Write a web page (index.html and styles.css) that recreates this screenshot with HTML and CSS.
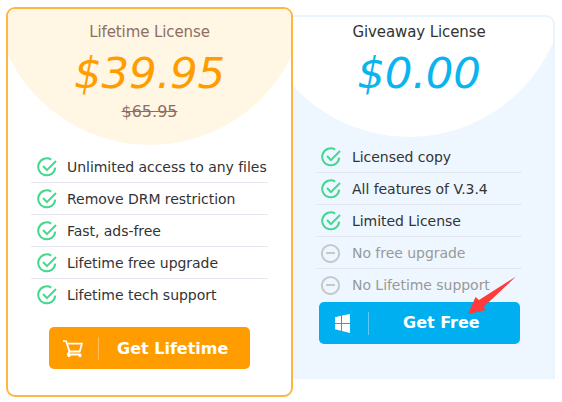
FILE: index.html
```
<!DOCTYPE html>
<html lang="en">
<head>
    <meta charset="UTF-8">
    <title>License</title>
    <link rel="stylesheet" href="styles.css">
</head>
<body>
    <svg class="symbols">
        <symbol id="check" viewBox="0 0 20 20">
            <path d="M14.2 2.6A8.5 8.5 0 1 0 18.2 10.7M6.1 9l3.8 4.1L19 4"/>
        </symbol>
        <symbol id="minus" viewBox="0 0 20 20">
            <circle cx="9.500" cy="10.500" r="8.600"/>
            <path d="M5 10h9"/>
        </symbol>
    </svg>
    <main class="plans">
        <section class="card lifetime">
            <header>
                <h2>Lifetime License</h2>
                <p class="price">$39.95</p>
                <del>$65.95</del>
            </header>
            <ul>
                <li><svg><use href="#check"/></svg><span>Unlimited access to any files</span></li>
                <li><svg><use href="#check"/></svg><span>Remove DRM restriction</span></li>
                <li><svg><use href="#check"/></svg><span>Fast, ads-free</span></li>
                <li><svg><use href="#check"/></svg><span>Lifetime free upgrade</span></li>
                <li><svg><use href="#check"/></svg><span>Lifetime tech support</span></li>
            </ul>
            <a class="btn" href="javascript:;">
                <span class="icon">
                    <svg class="cart" width="20" height="18" viewBox="0 0 20 18">
                        <path d="M0 1.200h3.200l3.300 10.300h10.200L19 3.600H5M6.400 11.500l-1.600 3H18"/>
                        <circle cx="6" cy="15.600" r="1.600"/>
                        <circle cx="17" cy="15.600" r="1.600"/>
                    </svg>
                </span>
                <b>Get Lifetime</b>
            </a>
        </section>
        <section class="card giveaway">
            <header>
                <h2>Giveaway License</h2>
                <p class="price">$0.00</p>
            </header>
            <ul>
                <li><svg><use href="#check"/></svg><span>Licensed copy</span></li>
                <li><svg><use href="#check"/></svg><span>All features of V.3.4</span></li>
                <li><svg><use href="#check"/></svg><span>Limited License</span></li>
                <li class="no"><svg><use href="#minus"/></svg><span>No free upgrade</span></li>
                <li class="no"><svg><use href="#minus"/></svg><span>No Lifetime support</span></li>
            </ul>
            <a class="btn" href="javascript:;">
                <span class="icon">
                    <svg width="15" height="19" viewBox="0 0 15 19">
                        <path fill="#fff" d="M0 3.200L6 1.700V9H0zM7 1.500L15 0v9H7zM0 10h6v6.800l-6-1.500zM7 10h8v9l-8-2z"/>
                    </svg>
                </span>
                <b>Get Free</b>
            </a>
            <svg class="arrow" width="49" height="39" viewBox="0 0 49 39">
                <path fill="#ff3b3b" d="M48 .5L11 24 7.500 21 0 38l18-4-2.500-3z"/>
            </svg>
        </section>
    </main>
</body>
</html>
```
FILE: styles.css
```
* {
    padding: 0;
    margin: 0;
    box-sizing: border-box;
}

body {
    width: 562px;
    height: 402px;
    overflow: hidden;
    background: #fff;
    color: #333;
    font-family: Verdana, "DejaVu Sans", sans-serif;
}

.symbols {
    display: none;
}

.plans {
    display: flex;
    align-items: flex-start;
    padding: 7px 0 0 6px;
}

.card {
    position: relative;
    display: flex;
    flex-direction: column;
}

header {
    display: flex;
    flex-direction: column;
    align-items: center;
    overflow: hidden;
    position: relative;
    white-space: nowrap;
}

/* half circle behind the price */
header::before {
    content: "";
    position: absolute;
    width: 314px;
    height: 314px;
    bottom: 0;
    border-radius: 50%;
}

h2,
.price,
del {
    position: relative;
}

h2 {
    font-size: 15px;
    font-weight: normal;
    line-height: 20px;
    letter-spacing: -.1px;
}

.price {
    margin-top: 6px;
    font-size: 43.5px;
    font-style: italic;
    line-height: 50px;
    letter-spacing: -.2px;
}

.lifetime {
    width: 287px;
    height: 390px;
    z-index: 1;
    background: #fff;
    border: 2px solid #ffb640;
    border-radius: 9px;
}

.lifetime header {
    height: 136px;
    padding-top: 13px;
    color: #8d6e63;
    border-radius: 7px 7px 0 0;
}

.lifetime header::before {
    left: -15px;
    background: #fff7e3;
}

.lifetime .price {
    color: #ff9d00;
}

del {
    font-size: 16px;
    line-height: 20px;
    margin-top: 4px;
}

.giveaway {
    width: 272px;
    height: 364px;
    margin: 8px 0 0 -10px;
    background: #eef7ff;
    border: 2px solid #e8f5ff;
    border-bottom: none;
    border-radius: 9px 9px 0 0;
}

.giveaway header {
    height: 120px;
    padding-top: 5px;
    border-radius: 7px 7px 0 0;
}

.giveaway header::before {
    left: -33px;
    background: #fff;
}

.giveaway .price {
    color: #0ab5ef;
}

ul {
    list-style: none;
    width: 237px;
    margin: 6px 0 0 23px;
}

.giveaway ul {
    width: 206px;
    margin: 4px 0 0 31px;
}

li {
    display: flex;
    align-items: center;
    height: 32px;
    padding-left: 6px;
    font-size: 14px;
    letter-spacing: -.04px;
    white-space: nowrap;
    border-bottom: 1px solid #e4e7ef;
}

.giveaway li {
    padding-left: 5px;
}

li:last-child {
    border-bottom: none;
}

li svg {
    width: 20px;
    height: 20px;
    margin-right: 10px;
    fill: none;
    stroke: #45d690;
    stroke-width: 2;
}

.giveaway li svg {
    margin-right: 11px;
}

.no {
    color: #999;
}

.giveaway .no svg {
    stroke: #c8c8c8;
}

.btn {
    display: flex;
    align-items: center;
    width: 201px;
    height: 42px;
    margin: 16px 0 0 41px;
    color: #fff;
    font-size: 16px;
    text-decoration: none;
    white-space: nowrap;
    background: #ff9d00;
    border-radius: 5px;
}

.giveaway .btn {
    margin: 1px 0 0 34px;
    background: #00aff0;
}

.icon {
    display: flex;
    align-items: center;
    width: 50px;
    height: 23px;
    padding-left: 14px;
    border-right: 1px solid rgba(255, 255, 255, .35);
}

.giveaway .icon {
    padding-left: 16px;
}

.cart {
    margin-top: 2px;
    fill: none;
    stroke: #fff;
    stroke-width: 1.8;
    stroke-linejoin: round;
}

.cart circle {
    fill: #fff;
    stroke: none;
}

.btn b {
    margin-left: 18px;
}

.giveaway .btn b {
    margin: -2px 0 0 34px;
}

.arrow {
    position: absolute;
    left: 183px;
    top: 259px;
}
```
